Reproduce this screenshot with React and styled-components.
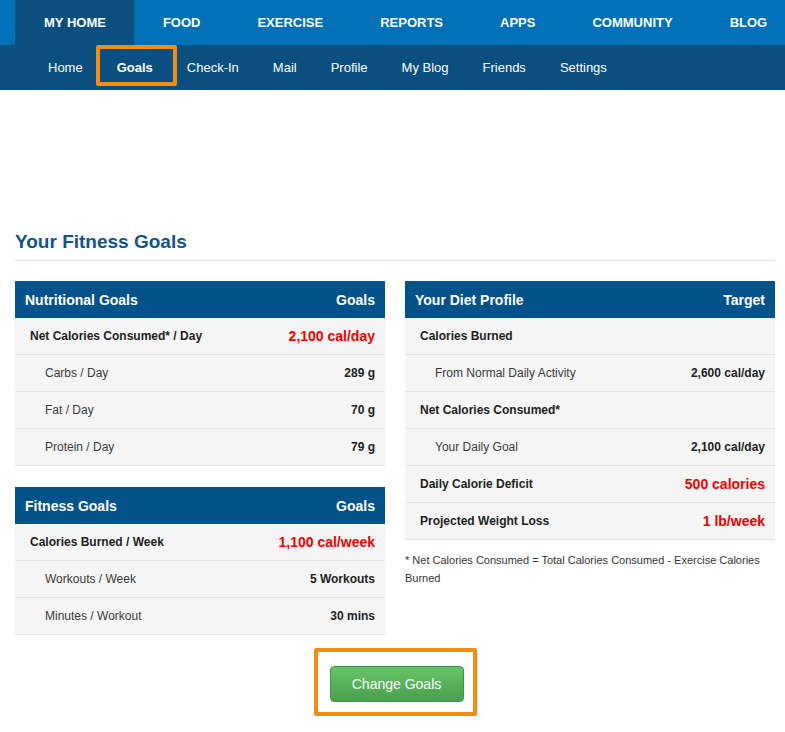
import React from 'react';
import styled, { createGlobalStyle } from 'styled-components';

const ORANGE = '#f78d0e';

const GlobalStyle = createGlobalStyle`
  body {
    margin: 0;
    background: #fff;
    font-family: "Liberation Sans", Arial, sans-serif;
  }
`;

const Page = styled.div`
  width: 785px;
  min-height: 732px;
  overflow: hidden;
`;

const TopNav = styled.nav`
  display: flex;
  height: 45px;
  padding-left: 15px;
  background: #0070b8;
  overflow: hidden;
`;

const TopItem = styled.a`
  display: flex;
  flex-shrink: 0;
  align-items: center;
  padding: 0 28px 0 29px;
  color: #fff;
  font-size: 13px;
  font-weight: bold;
  white-space: nowrap;
  text-transform: uppercase;
  background: ${(p) => (p.$active ? '#0b4f80' : 'transparent')};
`;

const SubNav = styled.nav`
  display: flex;
  height: 45px;
  padding-left: 31px;
  background: #0a4f7f;
`;

const SubItem = styled.a`
  position: relative;
  display: flex;
  flex-shrink: 0;
  align-items: center;
  padding: 0 17px 1px;
  color: #fff;
  font-size: 13px;
  white-space: nowrap;
  font-weight: ${(p) => (p.$active ? 'bold' : 'normal')};
  ${(p) =>
    p.$active &&
    `
    &::after {
      content: '';
      position: absolute;
      top: 0;
      bottom: 4px;
      left: -4px;
      right: -7px;
      border: 4px solid ${ORANGE};
      border-radius: 2px;
    }
  `}
`;

const Main = styled.main`
  padding: 140px 10px 16px 15px;
`;

const Title = styled.h1`
  margin: 0 0 20px;
  padding-bottom: 6px;
  border-bottom: 1px solid #e3e3e3;
  color: #0f5587;
  font-size: 19px;
  line-height: 24px;
  font-weight: bold;
`;

const Columns = styled.div`
  display: grid;
  grid-template-columns: 370px 370px;
  column-gap: 20px;
  align-items: start;
`;

const Column = styled.div`
  display: flex;
  flex-direction: column;
  gap: 21px;
`;

const Table = styled.div`
  display: flex;
  flex-direction: column;
`;

const Head = styled.div`
  display: flex;
  justify-content: space-between;
  align-items: center;
  height: 37px;
  padding: 0 10px;
  background: #04528a;
  color: #fff;
  font-size: 14px;
  font-weight: bold;
`;

const Row = styled.div`
  display: flex;
  justify-content: space-between;
  align-items: center;
  height: 36px;
  padding: 0 10px 0 ${(p) => (p.$sub ? '30px' : '15px')};
  background: #f5f5f5;
  border-bottom: 1px solid #e2e2e2;
  font-size: 12px;
`;

const Label = styled.span`
  color: ${(p) => (p.$sub ? '#3a3a3a' : '#1e1e1e')};
  font-weight: ${(p) => (p.$sub ? 'normal' : 'bold')};
`;

const Value = styled.span`
  color: ${(p) => (p.$red ? '#f00000' : '#1e1e1e')};
  font-size: ${(p) => (p.$red ? '14px' : '12px')};
  font-weight: bold;
`;

const Note = styled.p`
  margin: 11px 0 0;
  color: #333;
  font-size: 11px;
  line-height: 18px;
`;

const ButtonArea = styled.div`
  display: flex;
  justify-content: center;
  margin-top: 13px;
`;

const Highlight = styled.div`
  padding: 14px 9px 10px 12px;
  border: 4px solid ${ORANGE};
  border-radius: 2px;
`;

const Button = styled.button`
  width: 134px;
  height: 36px;
  border: 1px solid #43904a;
  border-radius: 4px;
  background: linear-gradient(#66c466, #4aa04e);
  color: #fff;
  font-family: "Liberation Sans", Arial, sans-serif;
  font-size: 14px;
  cursor: pointer;
`;

const topItems = ['My Home', 'Food', 'Exercise', 'Reports', 'Apps', 'Community', 'Blog'];
const subItems = ['Home', 'Goals', 'Check-In', 'Mail', 'Profile', 'My Blog', 'Friends', 'Settings'];

const GoalTable = ({ title, col, rows }) => (
  <Table>
    <Head>
      <span>{title}</span>
      <span>{col}</span>
    </Head>
    {rows.map((r) => (
      <Row key={r.label} $sub={r.sub}>
        <Label $sub={r.sub}>{r.label}</Label>
        <Value $red={r.red}>{r.value}</Value>
      </Row>
    ))}
  </Table>
);

export default function App() {
  return (
    <Page>
      <GlobalStyle />
      <TopNav>
        {topItems.map((t) => (
          <TopItem key={t} $active={t === 'My Home'}>
            {t}
          </TopItem>
        ))}
      </TopNav>
      <SubNav>
        {subItems.map((t) => (
          <SubItem key={t} $active={t === 'Goals'}>
            {t}
          </SubItem>
        ))}
      </SubNav>
      <Main>
        <Title>Your Fitness Goals</Title>
        <Columns>
          <Column>
            <GoalTable
              title="Nutritional Goals"
              col="Goals"
              rows={[
                { label: 'Net Calories Consumed* / Day', value: '2,100 cal/day', red: true },
                { label: 'Carbs / Day', value: '289 g', sub: true },
                { label: 'Fat / Day', value: '70 g', sub: true },
                { label: 'Protein / Day', value: '79 g', sub: true },
              ]}
            />
            <GoalTable
              title="Fitness Goals"
              col="Goals"
              rows={[
                { label: 'Calories Burned / Week', value: '1,100 cal/week', red: true },
                { label: 'Workouts / Week', value: '5 Workouts', sub: true },
                { label: 'Minutes / Workout', value: '30 mins', sub: true },
              ]}
            />
          </Column>
          <Column>
            <div>
              <GoalTable
                title="Your Diet Profile"
                col="Target"
                rows={[
                  { label: 'Calories Burned', value: '' },
                  { label: 'From Normal Daily Activity', value: '2,600 cal/day', sub: true },
                  { label: 'Net Calories Consumed*', value: '' },
                  { label: 'Your Daily Goal', value: '2,100 cal/day', sub: true },
                  { label: 'Daily Calorie Deficit', value: '500 calories', red: true },
                  { label: 'Projected Weight Loss', value: '1 lb/week', red: true },
                ]}
              />
              <Note>* Net Calories Consumed = Total Calories Consumed - Exercise Calories Burned</Note>
            </div>
          </Column>
        </Columns>
        <ButtonArea>
          <Highlight>
            <Button>Change Goals</Button>
          </Highlight>
        </ButtonArea>
      </Main>
    </Page>
  );
}
